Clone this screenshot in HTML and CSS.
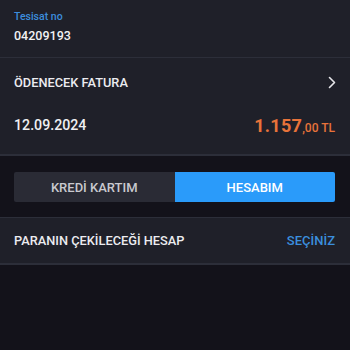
FILE: index.html
```html
<!DOCTYPE html>
<html lang="tr">
<head>
<meta charset="utf-8">
<link rel="stylesheet" href="styles.css">
</head>
<body>
<section class="card card-top">
  <div class="label">Tesisat no</div>
  <div class="value">04209193</div>
</section>
<section class="card card-bill">
  <div class="row row-head">
    <span class="title">ÖDENECEK FATURA</span>
    <svg class="chev" width="8" height="13" viewBox="0 0 8 13"><path d="M1.5 1.5 L6.5 6.5 L1.5 11.5" fill="none" stroke="#e6e6ea" stroke-width="1.6" stroke-linecap="round" stroke-linejoin="round"/></svg>
  </div>
  <div class="row row-amount">
    <span class="date">12.09.2024</span>
    <span class="amount"><span class="big">1.157</span><span class="small">,00 TL</span></span>
  </div>
</section>
<div class="toggle-wrap">
  <div class="toggle">
    <div class="opt">KREDİ KARTIM</div>
    <div class="opt active">HESABIM</div>
  </div>
</div>
<section class="card card-account">
  <div class="row">
    <span class="title">PARANIN ÇEKİLECEĞİ HESAP</span>
    <span class="link">SEÇİNİZ</span>
  </div>
</section>
</body>
</html>
```
FILE: styles.css
```css
* { box-sizing: border-box; }
html, body { margin: 0; padding: 0; }
body {
  width: 350px;
  height: 350px;
  background: #13121a;
  font-family: Roboto, "Liberation Sans", sans-serif;
  color: #ececf0;
  overflow: hidden;
}
.card {
  background: #1f2029;
  padding: 0 15px 0 14px;
}
.card-top {
  height: 58px;
  padding-top: 10px;
  border-bottom: 1px solid #2c2e39;
}
.label {
  font-size: 10.5px;
  line-height: 13px;
  color: #3c8ddc;
  font-weight: 500;
}
.value {
  margin-top: 5px;
  font-size: 12.5px;
  line-height: 16px;
  font-weight: 500;
  color: #f2f2f4;
}
.card-bill {
  height: 98px;
  border-bottom: 2px solid #2c2e39;
}
.row {
  display: flex;
  align-items: center;
  justify-content: space-between;
}
.row-head { height: 48px; }
.row-amount { height: 40px; padding-bottom: 2px; }
.title {
  font-size: 12.8px;
  font-weight: 500;
  color: #ececf0;
}
.chev { margin-right: -1px; }
.date {
  font-size: 14.2px;
  font-weight: 500;
  color: #f0f0f2;
}
.amount {
  color: #e8733a;
  font-weight: 700;
  display: flex;
  align-items: baseline;
}
.big { font-size: 18px; letter-spacing: 0.3px; }
.small { font-size: 12px; font-weight: 500; }
.toggle-wrap {
  height: 61px;
  padding: 16px 15px 0 14px;
}
.toggle {
  display: flex;
  height: 30px;
  border-radius: 2px;
  overflow: hidden;
}
.opt {
  flex: 1;
  display: flex;
  align-items: center;
  justify-content: center;
  font-size: 13px;
  font-weight: 500;
  background: #2a2b35;
  color: #c9c9cf;
}
.opt.active {
  background: #2a9bfa;
  color: #ffffff;
}
.card-account {
  height: 48px;
  border-top: 1px solid #2c2e39;
  border-bottom: 2px solid #2c2e39;
}
.card-account .row { height: 45px; }
.link {
  font-size: 13px;
  font-weight: 500;
  color: #3b8edd;
}
```
